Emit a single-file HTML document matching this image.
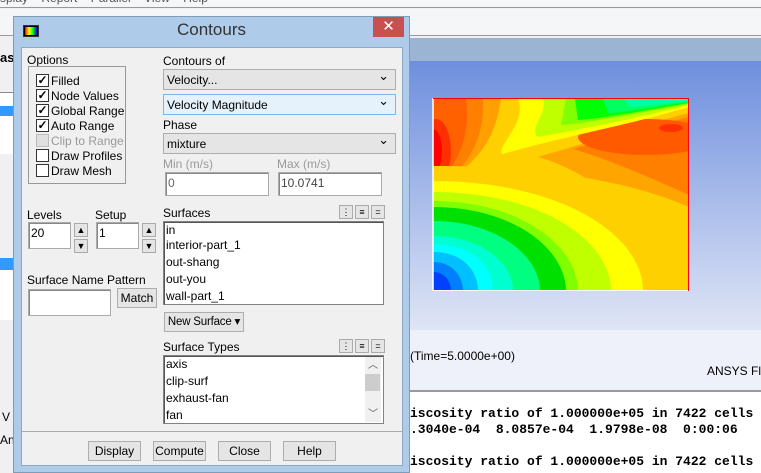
<!DOCTYPE html>
<html><head><meta charset="utf-8"><style>
*{margin:0;padding:0;box-sizing:border-box}
body{width:761px;height:473px;overflow:hidden;position:relative;background:#f0f0f0;font-family:"Liberation Sans",sans-serif;font-size:12px;color:#000}
.a{position:absolute}
.cb{position:absolute;left:36px;width:13px;height:13px;border:1px solid #333;background:#fff;font-size:12px;line-height:11px;text-align:center;font-weight:bold}
.cl{position:absolute;left:51px;font-size:12px;line-height:14px}
.sel{position:absolute;left:163px;width:233px;height:21px;border:1px solid #adadad;background:#e5e5e5;padding:3px 3px;font-size:12px}
.sel:after{content:"⌄";position:absolute;right:6px;top:-2px;font-size:13px}
.inp{position:absolute;background:#fff;border:1px solid #aaa;box-shadow:inset 1px 1px 0 #888;padding:3px 2px;font-size:12px}
.btn{position:absolute;border:1px solid #adadad;background:#e5e5e5;text-align:center;font-size:12px;line-height:18px;white-space:nowrap}
.lb{position:absolute;background:#fff;border:1px solid #828282;box-shadow:inset 1px 1px 0 #555}
.lb div{height:17px;line-height:17px;padding-left:2px;font-size:12px}
.sb{position:absolute;width:14px;height:14px;border:1px solid #aaa;background:#e5e5e5;font-size:9px;text-align:center;line-height:12px}
.con{position:absolute;left:410px;font-family:"Liberation Mono",monospace;font-weight:bold;font-size:13px;white-space:pre}
</style></head><body>
<div class="a" style="left:0;top:0;width:761px;height:8px;background:#f5f6f7;border-bottom:1px solid #999;overflow:hidden"><div style="position:absolute;top:-9px;left:0;color:#555;font-size:12px;white-space:pre">splay    Report    Parallel    View    Help</div></div>
<div class="a" style="left:0;top:9px;width:761px;height:27px;background:#f5f6f7;border-bottom:1px solid #999"></div>
<div class="a" style="left:0;top:37px;width:13px;height:436px;background:#f0f0f0"></div>
<div class="a" style="left:0;top:50px;font-weight:bold;font-size:13px">as</div>
<div class="a" style="left:0;top:92px;width:13px;height:62px;background:#fff;border-top:1px solid #888"></div>
<div class="a" style="left:0;top:106px;width:13px;height:10px;background:#3399ff"></div>
<div class="a" style="left:0;top:258px;width:13px;height:62px;background:#fff"></div>
<div class="a" style="left:0;top:258px;width:13px;height:12px;background:#3399ff"></div>
<div class="a" style="left:2px;top:410px">V</div>
<div class="a" style="left:0;top:433px">Anr</div>
<div class="a" style="left:410px;top:38px;width:351px;height:23px;background:#9bb4d3"></div>
<div class="a" style="left:410px;top:61px;width:351px;height:269px;background:linear-gradient(#6e8fde,#dfe5f5)"></div>
<div class="a" style="left:410px;top:330px;width:351px;height:60px;background:#eef1f9"></div>
<div class="a" style="left:410px;top:390px;width:351px;height:2px;background:#999"></div>
<div class="a" style="left:410px;top:392px;width:351px;height:81px;background:#fff"></div>
<div class="a" style="left:410px;top:349px;font-size:12px">(Time=5.0000e+00)</div>
<div class="a" style="left:707px;top:364px;font-size:12px">ANSYS Fl</div>
<div class="con" style="top:406px">iscosity ratio of 1.000000e+05 in 7422 cells</div>
<div class="con" style="top:422px">.3040e-04  8.0857e-04  1.9798e-08  0:00:06</div>
<div class="con" style="top:454px">iscosity ratio of 1.000000e+05 in 7422 cells</div>
<svg class="a" style="left:432px;top:98px" width="258" height="194" viewBox="-1 -1 258 194">
<defs><clipPath id="c"><rect x="0" y="0" width="255" height="191"/></clipPath></defs>
<g clip-path="url(#c)">
<rect x="0" y="0" width="256" height="192" fill="#ffd000"/>
<path d="M105,58 C150,45 230,20 256,14 V155 C200,110 150,70 105,58 Z" fill="#ffa500"/>
<path d="M140,50 C190,36 240,22 256,18 V96 C220,80 180,62 140,50 Z" fill="#ff8000"/>
<ellipse cx="213" cy="38" rx="68" ry="18" fill="#ff5a00"/>
<ellipse cx="238" cy="29" rx="12" ry="4" fill="#ff3000"/>
<path d="M0,0 H68 C62,40 48,62 0,92 Z" fill="#ffa000"/>
<path d="M0,0 H50 C52,35 38,70 0,90 Z" fill="#ff8000"/>
<path d="M0,0 H33 C38,35 25,70 0,86 Z" fill="#ff6000"/>
<ellipse cx="3" cy="52" rx="15" ry="32" fill="#ff3000"/>
<ellipse cx="0" cy="52" rx="9" ry="22" fill="#ff0000"/>
<path d="M85,0 H256 V8 C200,25 120,40 70,55 C60,50 95,25 85,0 Z" fill="#ffff00"/>
<path d="M110,0 H256 V6 C200,20 140,32 105,38 C95,30 115,15 110,0 Z" fill="#c0ff00"/>
<path d="M133,0 H256 V5 C200,15 150,25 128,26 Z" fill="#80ff00"/>
<path d="M142,0 H256 V4 C210,12 165,20 145,21 Z" fill="#00ff00"/>
<path d="M170,0 H256 V3 C220,8 190,14 175,14 Z" fill="#00ff60"/>
<path d="M192,0 H256 V2 C230,5 210,8 196,8 Z" fill="#00ffa0"/>
<path d="M230,0 H256 V2 Z" fill="#00ffd0"/>
<path d="M0,192 V67 C180,67 330,110 330,192 Z" fill="#ffd000"/>
<path d="M0,192 V82 C126,82 210,135 210,192 Z" fill="#ffff00"/>
<path d="M0,192 V93 C107,93 178,141 178,192 Z" fill="#c0ff00"/>
<path d="M0,192 V102 C87,102 145,147 145,192 Z" fill="#80ff00"/>
<path d="M0,192 V108 C80,108 133,150 133,192 Z" fill="#00e000"/>
<path d="M0,192 V122 C64,122 107,157 107,192 Z" fill="#00ff80"/>
<path d="M0,192 V137 C48,137 80,164 80,192 Z" fill="#00ffd0"/>
<path d="M0,192 V145 C40,145 60,168 60,192 Z" fill="#00ffff"/>
<path d="M0,192 V153 C30,153 45,172 45,192 Z" fill="#00c0ff"/>
<path d="M0,192 V163 C20,163 30,178 30,192 Z" fill="#0080ff"/>
<path d="M0,192 V173 C12,173 18,183 18,192 Z" fill="#0040ff"/>
</g>
<line x1="0" y1="-1" x2="0" y2="192" stroke="#fff" stroke-width="1.5"/>
<line x1="-1" y1="191.5" x2="255" y2="191.5" stroke="#fff"/>
<line x1="255.5" y1="-1" x2="255.5" y2="192" stroke="#f00"/>
<line x1="0" y1="-0.5" x2="256" y2="-0.5" stroke="#f00"/>
</svg>
<div class="a" style="left:13px;top:16px;width:397px;height:457px;background:#aecbe9;border:1px solid #7f9db9"></div>
<div class="a" style="left:23px;top:25px;width:16px;height:12px;background:#000;border:1px solid #333"><div style="position:absolute;left:1px;top:1px;width:12px;height:8px;background:linear-gradient(90deg,#f00,#ff0,#0f0,#00f)"></div></div>
<div class="a" style="left:0;top:20px;width:423px;text-align:center;font-size:17px;color:#333">Contours</div>
<div class="a" style="left:373px;top:17px;width:31px;height:20px;background:#c75050;color:#fff;text-align:center;font-size:15px;line-height:20px">✕</div>
<div class="a" style="left:21px;top:47px;width:382px;height:419px;background:#f0f0f0;border:1px solid #8fa8c4"></div>
<div class="a" style="left:27px;top:53px">Options</div>
<div class="a" style="left:28px;top:66px;width:98px;height:118px;border:1px solid #999"></div>
<div class="cb" style="top:74px">✓</div><div class="cl" style="top:74px">Filled</div>
<div class="cb" style="top:89px">✓</div><div class="cl" style="top:89px">Node Values</div>
<div class="cb" style="top:104px">✓</div><div class="cl" style="top:104px">Global Range</div>
<div class="cb" style="top:119px">✓</div><div class="cl" style="top:119px">Auto Range</div>
<div class="cb" style="top:134px;background:#e0e0e0;border-color:#bbb"></div><div class="cl" style="top:134px;color:#999">Clip to Range</div>
<div class="cb" style="top:149px"></div><div class="cl" style="top:149px">Draw Profiles</div>
<div class="cb" style="top:164px"></div><div class="cl" style="top:164px">Draw Mesh</div>
<div class="a" style="left:163px;top:54px">Contours of</div>
<div class="sel" style="top:69px">Velocity...</div>
<div class="sel" style="top:94px;background:#e5f1fb;border-color:#7eb4ea">Velocity Magnitude</div>
<div class="a" style="left:163px;top:118px">Phase</div>
<div class="sel" style="top:133px">mixture</div>
<div class="a" style="left:163px;top:157px;color:#999">Min (m/s)</div>
<div class="a" style="left:277px;top:157px;color:#999">Max (m/s)</div>
<div class="inp" style="left:165px;top:172px;width:104px;height:24px;color:#666">0</div>
<div class="inp" style="left:278px;top:172px;width:104px;height:24px;color:#444">10.0741</div>
<div class="a" style="left:27px;top:208px">Levels</div>
<div class="a" style="left:95px;top:208px">Setup</div>
<div class="inp" style="left:28px;top:222px;width:43px;height:27px">20</div>
<div class="inp" style="left:96px;top:222px;width:43px;height:27px">1</div>
<div class="sb" style="left:74px;top:223px">▲</div><div class="sb" style="left:74px;top:239px">▼</div>
<div class="sb" style="left:142px;top:223px">▲</div><div class="sb" style="left:142px;top:239px">▼</div>
<div class="a" style="left:27px;top:273px">Surface Name Pattern</div>
<div class="inp" style="left:28px;top:289px;width:83px;height:27px"></div>
<div class="btn" style="left:117px;top:288px;width:40px;height:20px">Match</div>
<div class="a" style="left:163px;top:206px">Surfaces</div>
<div class="sb" style="left:339px;top:205px">⋮</div><div class="sb" style="left:355px;top:205px;font-weight:bold">≡</div><div class="sb" style="left:371px;top:205px">=</div>
<div class="lb" style="left:163px;top:221px;width:221px;height:84px;overflow:hidden">
<div style="height:15px">in</div><div>interior-part_1</div><div>out-shang</div><div>out-you</div><div>wall-part_1</div></div>
<div class="btn" style="left:164px;top:312px;width:80px;height:20px;font-size:11.5px;letter-spacing:-0.2px">New Surface ▾</div>
<div class="a" style="left:163px;top:340px">Surface Types</div>
<div class="sb" style="left:339px;top:339px">⋮</div><div class="sb" style="left:355px;top:339px;font-weight:bold">≡</div><div class="sb" style="left:371px;top:339px">=</div>
<div class="lb" style="left:163px;top:355px;width:221px;height:69px;overflow:hidden">
<div>axis</div><div>clip-surf</div><div>exhaust-fan</div><div>fan</div></div>
<div class="a" style="left:365px;top:357px;width:16px;height:65px;background:#f0f0f0"></div>
<div class="a" style="left:365px;top:374px;width:15px;height:17px;background:#cdcdcd"></div>
<div class="a" style="left:368px;top:356px;font-size:10px;color:#555">︿</div>
<div class="a" style="left:368px;top:405px;font-size:10px;color:#555">﹀</div>
<div class="a" style="left:21px;top:431px;width:382px;height:1px;background:#aaa"></div>
<div class="btn" style="left:88px;top:441px;width:53px;height:20px">Display</div>
<div class="btn" style="left:153px;top:441px;width:53px;height:20px">Compute</div>
<div class="btn" style="left:218px;top:441px;width:53px;height:20px">Close</div>
<div class="btn" style="left:283px;top:441px;width:53px;height:20px">Help</div>
</body></html>
